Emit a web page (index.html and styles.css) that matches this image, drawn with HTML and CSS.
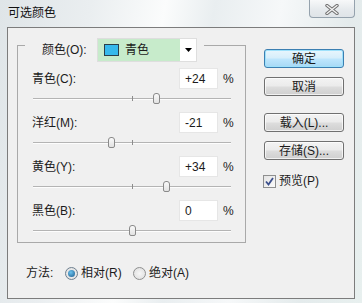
FILE: index.html
```html
<!DOCTYPE html>
<html>
<head>
<meta charset="utf-8">
<link rel="stylesheet" href="styles.css">
</head>
<body>
<div class="window">
  <div class="titlebar">
    <span class="title">可选颜色</span>
    <span class="close">
      <svg width="14" height="11" viewBox="0 0 14 11"><path d="M2 1.5 L12 9.5 M12 1.5 L2 9.5" stroke="#6f6f6f" stroke-width="3.4" stroke-linecap="round" fill="none"/><path d="M2 1.5 L12 9.5 M12 1.5 L2 9.5" stroke="#f4f4f4" stroke-width="1.4" stroke-linecap="round" fill="none"/></svg>
    </span>
  </div>
  <div class="client">
    <div class="main">
      <div class="group">
        <div class="group-head">
          <span class="head-lbl">颜色(O):</span>
          <div class="select">
            <span class="sel-body"><span class="swatch"></span><span>青色</span></span>
            <span class="sel-arrow"><svg width="7" height="4" viewBox="0 0 7 4"><path d="M0 0 H7 L3.5 4 Z" fill="#000"/></svg></span>
          </div>
        </div>
        <div class="row">
          <div class="row-top"><span class="lbl">青色(C):</span><span class="num">+24</span><span class="pct">%</span></div>
          <div class="slider"><span class="track"></span><span class="tick"></span><span class="thumb" style="left:62%"></span></div>
        </div>
        <div class="row">
          <div class="row-top"><span class="lbl">洋红(M):</span><span class="num">-21</span><span class="pct">%</span></div>
          <div class="slider"><span class="track"></span><span class="tick"></span><span class="thumb" style="left:39.5%"></span></div>
        </div>
        <div class="row">
          <div class="row-top"><span class="lbl">黄色(Y):</span><span class="num">+34</span><span class="pct">%</span></div>
          <div class="slider"><span class="track"></span><span class="tick"></span><span class="thumb" style="left:67%"></span></div>
        </div>
        <div class="row">
          <div class="row-top"><span class="lbl">黑色(B):</span><span class="num">0</span><span class="pct">%</span></div>
          <div class="slider"><span class="track"></span><span class="tick"></span><span class="thumb" style="left:50%"></span></div>
        </div>
      </div>
      <div class="buttons">
        <span class="btn default">确定</span>
        <span class="btn">取消</span>
        <span class="btn spaced">载入(L)...</span>
        <span class="btn">存储(S)...</span>
        <label class="check"><span class="cbox"><svg width="9" height="9" viewBox="0 0 9 9"><path d="M1 4.5 L3.5 7.5 L8 1" stroke="#3b4f8c" stroke-width="1.8" fill="none"/></svg></span>预览(P)</label>
      </div>
    </div>
    <div class="method">
      <span class="method-lbl">方法:</span>
      <span class="opt first"><span class="radio on"><span class="dot"></span></span>相对(R)</span>
      <span class="opt"><span class="radio"></span>绝对(A)</span>
    </div>
  </div>
</div>
</body>
</html>
```

FILE: styles.css
```css
* { box-sizing: border-box; }
html, body { margin: 0; padding: 0; }
body {
  font-family: "Liberation Sans", "Noto Sans CJK SC", sans-serif;
  font-size: 12px;
  line-height: 14px;
  color: #1b1b1b;
  background: #e9eef0;
}
.window {
  width: 362px;
  height: 303px;
  display: flex;
  flex-direction: column;
  background: linear-gradient(100deg, #dfe5e8 0%, #eaeef0 22%, #fbfcfc 40%, #e9eef0 52%, #f6f8f9 68%, #e4ebec 85%, #e8f0ef 100%);
}
.titlebar {
  height: 27px;
  flex: none;
  display: flex;
  align-items: flex-start;
  padding-left: 8px;
}
.title {
  margin-top: 6px;
  font-size: 12px;
  color: #111;
}
.close {
  margin-left: auto;
  margin-right: 7px;
  width: 46px;
  height: 18px;
  border: 1px solid #95a2ad;
  border-top: none;
  border-radius: 0 0 4px 4px;
  background: linear-gradient(#f7f8f9, #e6eaed 55%, #dfe4e8);
  display: flex;
  align-items: center;
  justify-content: center;
  padding-top: 1px;
}
.close svg { display: block; }
.client {
  flex: 1;
  margin: 0 7px 4px;
  border: 1px solid #7c7c7c;
  background: #f0f0f0;
  display: flex;
  flex-direction: column;
}
.main {
  display: flex;
  align-items: flex-start;
}
.group {
  margin: 17px 0 0 9px;
  width: 229px;
  height: 198px;
  border: 1px solid #a9a9a9;
  flex: none;
}
.group-head {
  margin: -8px 0 0 7px;
  padding: 0 7px 0 17px;
  background: #f0f0f0;
  display: flex;
  align-items: center;
  width: fit-content;
  height: 24px;
}
.head-lbl { width: 55px; }
.select {
  width: 100px;
  height: 24px;
  border: 1px solid #dedede;
  background: #fff;
  display: flex;
}
.sel-body {
  width: 82px;
  background: #c7ebcb;
  display: flex;
  align-items: center;
  padding-left: 6px;
  gap: 6px;
}
.swatch {
  width: 15px;
  height: 12px;
  background: #37b9ec;
  border: 1px solid #2b3f4c;
}
.sel-arrow {
  flex: 1;
  display: flex;
  align-items: center;
  justify-content: center;
}
.sel-arrow svg { display: block; }
.row {
  padding: 0 0 0 14px;
  margin-bottom: 7px;
}
.group-head + .row { margin-top: 6px; }
.row-top {
  display: flex;
  align-items: center;
  height: 21px;
}
.lbl { width: 147px; flex: none; }
.num {
  width: 39px;
  height: 21px;
  background: #fff;
  border: 1px solid #e6e6e6;
  padding: 3px 0 0 5px;
}
.pct { margin-left: 5px; }
.slider {
  position: relative;
  margin: 4px 0 0 1px;
  width: 198px;
  height: 12px;
}
.track {
  position: absolute;
  left: 0;
  right: 0;
  top: 5px;
  height: 2px;
  border-top: 1px solid #b4b4b4;
  border-bottom: 1px solid #fdfdfd;
}
.tick {
  position: absolute;
  left: 50%;
  top: 3px;
  width: 1px;
  height: 5px;
  background: #8c8c8c;
}
.thumb {
  position: absolute;
  top: 0;
  width: 7px;
  height: 11px;
  margin-left: -3px;
  border: 1px solid #8a8a8a;
  border-radius: 3px 3px 2px 2px;
  background: linear-gradient(#fafafa, #e2e2e2);
}
.buttons {
  margin: 21px 0 0 18px;
  display: flex;
  flex-direction: column;
  align-items: flex-start;
}
.btn {
  width: 80px;
  height: 19px;
  border: 1px solid #707070;
  border-radius: 3px;
  background: linear-gradient(#f3f3f3 0%, #ebebeb 48%, #dddddd 52%, #cfcfcf 100%);
  display: flex;
  align-items: center;
  justify-content: center;
  margin-bottom: 9px;
  box-shadow: inset 0 0 0 1px rgba(255,255,255,0.7);
}
.btn.default {
  border-color: #3c7fb1;
  background: linear-gradient(#e8f6fd 0%, #d6eefb 48%, #bee6fd 52%, #a7d9f5 100%);
  box-shadow: inset 0 0 0 1px #9ee1fb;
}
.btn.spaced { margin-top: 8px; }
.check {
  display: flex;
  align-items: center;
  margin: 5px 0 0 -1px;
  gap: 3px;
}
.cbox {
  width: 13px;
  height: 13px;
  border: 1px solid #8e8f8f;
  background: linear-gradient(135deg, #e4e4e4, #fafafa);
  display: flex;
  align-items: center;
  justify-content: center;
}
.cbox svg { display: block; }
.method {
  margin: 22px 0 0 18px;
  display: flex;
  align-items: center;
  height: 16px;
}
.method-lbl { width: 39px; }
.opt {
  display: flex;
  align-items: center;
  gap: 3px;
}
.opt.first { width: 68px; }
.radio {
  width: 13px;
  height: 13px;
  border-radius: 50%;
  border: 1px solid #8e8f8f;
  background: radial-gradient(circle at 50% 50%, #f6f6f6, #dcdcdc);
  display: flex;
  align-items: center;
  justify-content: center;
}
.radio.on { border-color: #6d7f8f; }
.dot {
  width: 7px;
  height: 7px;
  border-radius: 50%;
  background: radial-gradient(circle at 40% 35%, #6ac2ee, #1c5b8c);
}
```
